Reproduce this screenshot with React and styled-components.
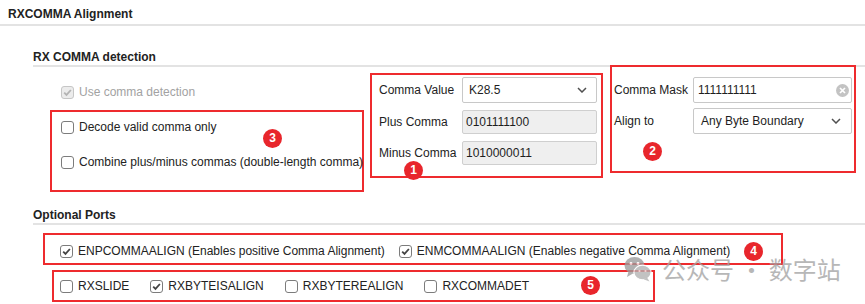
import React from "react";
import styled, { createGlobalStyle } from "styled-components";

const GlobalStyle = createGlobalStyle`
  html, body {
    margin: 0;
    padding: 0;
    background: #fff;
  }
  body {
    font-family: "Liberation Sans", Arial, sans-serif;
    font-size: 12px;
    color: #222;
  }
`;

const Page = styled.div`
  position: relative;
  width: 865px;
  height: 304px;
  overflow: hidden;
`;

const Title = styled.div`
  padding: 7px 8px 2px;
  line-height: 15px;
  font-weight: bold;
  border-bottom: 2px solid #e3e3e3;
`;

const Section = styled.div`
  padding-left: 33px;
  margin-top: ${(p) => p.$top}px;
`;

const SectionTitle = styled.div`
  line-height: 15px;
  font-weight: bold;
  border-bottom: 2px solid #e3e3e3;
`;

const DetectRow = styled.div`
  display: flex;
  align-items: flex-start;
`;

const LeftCol = styled.div`
  width: 337px;
  display: flex;
  flex-direction: column;
  align-items: flex-start;
`;

// red annotation frame around a group of controls
const Group = styled.div`
  position: relative;
  box-sizing: border-box;
  width: ${(p) => p.$w}px;
  margin: ${(p) => p.$m || "0"};
  padding: ${(p) => p.$pad || "0"};
  border: 2px solid #ee2b2e;
  display: flex;
  flex-direction: ${(p) => (p.$row ? "row" : "column")};
  align-items: ${(p) => (p.$row ? "center" : "flex-start")};
  gap: ${(p) => p.$gap || 0}px;
`;

const FormGrid = styled.div`
  display: grid;
  grid-template-columns: ${(p) => p.$cols};
  row-gap: ${(p) => p.$gap}px;
  align-items: center;
  width: 100%;
`;

const Badge = styled.span`
  position: absolute;
  left: ${(p) => p.$x}px;
  top: ${(p) => p.$y}px;
  width: 19px;
  height: 19px;
  border-radius: 50%;
  background: #e8262c;
  color: #fff;
  font-weight: bold;
  font-size: 12px;
  line-height: 19px;
  text-align: center;
`;

const Option = styled.label`
  display: flex;
  align-items: center;
  gap: 5px;
  height: 16px;
  margin: ${(p) => p.$m || "0"};
  white-space: nowrap;
  color: ${(p) => (p.$disabled ? "#a2a2a2" : "#222")};
`;

const Box = styled.span`
  box-sizing: border-box;
  flex: none;
  width: 13px;
  height: 13px;
  border: 1px solid ${(p) => (p.$disabled ? "#c6c6c6" : "#7c7c7c")};
  border-radius: 3px;
  background: ${(p) => (p.$disabled ? "#ececec" : "#fff")};
  display: inline-flex;
  align-items: center;
  justify-content: center;
`;

const Label = styled.span`
  white-space: nowrap;
  color: #222;
`;

const Field = styled.div`
  box-sizing: border-box;
  height: ${(p) => p.$h}px;
  border: 1px solid ${(p) => (p.$ro ? "#cfcfcf" : "#c8c8c8")};
  border-radius: 2px;
  background: ${(p) => (p.$ro ? "#efefef" : "#fff")};
  padding: 0 ${(p) => p.$pr || 4}px 0 ${(p) => p.$pl || 4}px;
  display: flex;
  align-items: center;
  justify-content: space-between;
  color: #1e1e1e;
`;

const Watermark = styled.div`
  position: absolute;
  left: 624px;
  top: 256px;
  display: flex;
  align-items: center;
  gap: 10px;
  opacity: 0.78;
  font-family: "Noto Sans CJK SC", sans-serif;
  font-size: 24px;
  line-height: 22px;
  color: #a4a4a4;
  pointer-events: none;
`;

function Check({ checked, disabled }) {
  return (
    <Box $disabled={disabled}>
      {checked && (
        <svg width="11" height="11" viewBox="0 0 11 11">
          <path
            d="M2.2 5.6 L4.5 7.9 L8.9 3"
            fill="none"
            stroke={disabled ? "#b4b4b4" : "#444"}
            strokeWidth="1.8"
          />
        </svg>
      )}
    </Box>
  );
}

function CheckOption({ label, checked, disabled, m }) {
  return (
    <Option $disabled={disabled} $m={m}>
      <Check checked={checked} disabled={disabled} />
      {label}
    </Option>
  );
}

const Chevron = () => (
  <svg width="10" height="6" viewBox="0 0 10 6">
    <polyline points="1,1 5,5 9,1" fill="none" stroke="#505050" strokeWidth="1.5" />
  </svg>
);

const ClearIcon = () => (
  <svg width="13" height="13" viewBox="0 0 13 13">
    <circle cx="6.5" cy="6.5" r="6.5" fill="#c3c3c3" />
    <path d="M4 4 L9 9 M9 4 L4 9" stroke="#fff" strokeWidth="1.7" />
  </svg>
);

const WeChat = () => (
  <svg width="28" height="26" viewBox="0 0 28 26">
    <ellipse cx="10.5" cy="9.5" rx="10" ry="8.5" fill="#9c9c9c" />
    <path d="M4.5 15.5 L3 21 L9 17.5 Z" fill="#9c9c9c" />
    <ellipse cx="18.5" cy="16.5" rx="8.6" ry="7.3" fill="#b2b2b2" stroke="#fff" strokeWidth="1.2" />
    <path d="M23 21.5 L25.5 25.5 L19.5 23.3 Z" fill="#b2b2b2" />
    <circle cx="7" cy="7.5" r="1.4" fill="#fff" />
    <circle cx="14" cy="7.5" r="1.4" fill="#fff" />
    <circle cx="15.5" cy="15" r="1.1" fill="#fff" />
    <circle cx="21.5" cy="15" r="1.1" fill="#fff" />
  </svg>
);

export default function App() {
  return (
    <Page>
      <GlobalStyle />
      <Title>RXCOMMA Alignment</Title>

      <Section $top={24}>
        <SectionTitle>RX COMMA detection</SectionTitle>
        <DetectRow>
          <LeftCol>
            <CheckOption label="Use comma detection" checked disabled m="17px 0 0 28px" />
            <Group $w={314} $m="10px 0 0 17px" $pad="7px 0 20px 9px" $gap={19}>
              <CheckOption label="Decode valid comma only" />
              <CheckOption label="Combine plus/minus commas (double-length comma)" />
              <Badge $x={211} $y={17}>3</Badge>
            </Group>
          </LeftCol>

          <Group $w={233} $m="6px 0 0 0" $pad="2px 4px 11px 7px">
            <FormGrid $cols="83px 135px" $gap={7}>
              <Label>Comma Value</Label>
              <Field $h={26} $pl={6} $pr={9}>
                K28.5
                <Chevron />
              </Field>
              <Label>Plus Comma</Label>
              <Field $h={24} $ro $pl={3}>0101111100</Field>
              <Label>Minus Comma</Label>
              <Field $h={24} $ro $pl={3}>1010000011</Field>
            </FormGrid>
            <Badge $x={32} $y={86}>1</Badge>
          </Group>

          <Group $w={246} $m="-2px 0 0 7px" $pad="10px 2px 37px 2px">
            <FormGrid $cols="79px 159px" $gap={5}>
              <Label>Comma Mask</Label>
              <Field $h={26} $pl={4} $pr={2}>
                1111111111
                <ClearIcon />
              </Field>
              <Label>Align to</Label>
              <Field $h={26} $pl={7} $pr={10}>
                Any Byte Boundary
                <Chevron />
              </Field>
            </FormGrid>
            <Badge $x={31} $y={75}>2</Badge>
          </Group>
        </DetectRow>
      </Section>

      <Section $top={16}>
        <SectionTitle>Optional Ports</SectionTitle>
        <Group $row $w={740} $m="8px 0 0 10px" $pad="8px 0 4px 15px" $gap={14}>
          <CheckOption label="ENPCOMMAALIGN (Enables positive Comma Alignment)" checked />
          <CheckOption label="ENMCOMMAALIGN (Enables negative Comma Alignment)" checked />
          <Badge $x={699} $y={7}>4</Badge>
        </Group>
        <Group $row $w={603} $m="5px 0 0 19px" $pad="6px 0 6px 6px" $gap={21}>
          <CheckOption label="RXSLIDE" />
          <CheckOption label="RXBYTEISALIGN" checked />
          <CheckOption label="RXBYTEREALIGN" />
          <CheckOption label="RXCOMMADET" />
          <Badge $x={527} $y={4}>5</Badge>
        </Group>
      </Section>

      <Watermark>
        <WeChat />
        <span>公众号 · 数字站</span>
      </Watermark>
    </Page>
  );
}
